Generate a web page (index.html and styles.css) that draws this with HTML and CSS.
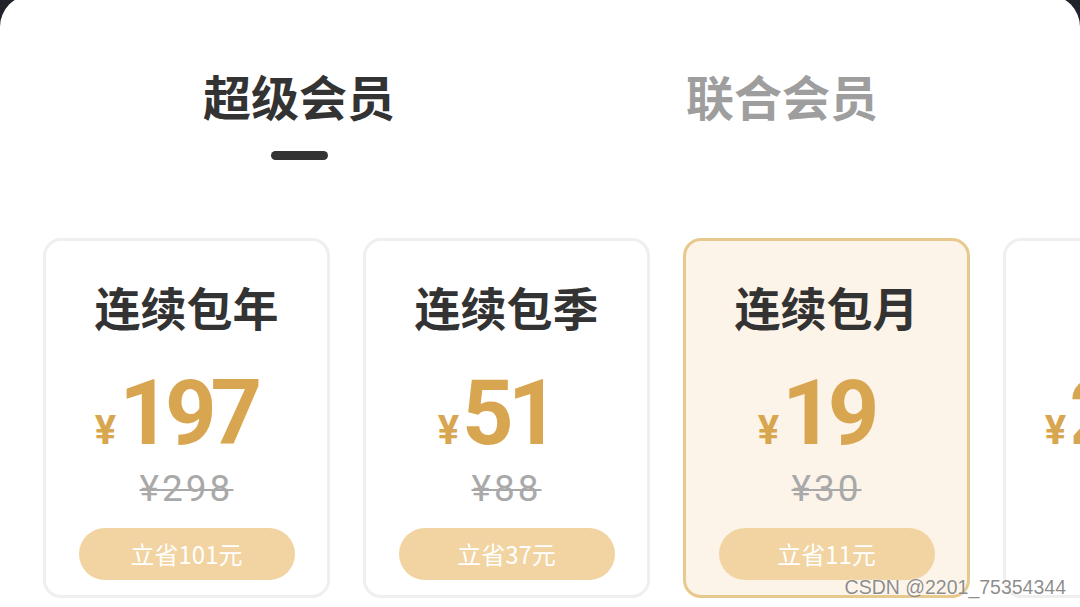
FILE: index.html
```html
<!DOCTYPE html>
<html lang="zh-CN">
<head>
<meta charset="utf-8">
<title>会员</title>
<link rel="stylesheet" href="styles.css">
</head>
<body>
<div class="panel">
  <div class="tabs">
    <div class="tab active">
      <span class="tab-text">超级会员</span>
      <span class="indicator"></span>
    </div>
    <div class="tab">
      <span class="tab-text">联合会员</span>
    </div>
  </div>
  <div class="cards">
    <div class="card">
      <div class="title">连续包年</div>
      <div class="price"><span class="yen">¥</span><span class="num">197</span></div>
      <div class="orig">¥298</div>
      <div class="save">立省101元</div>
    </div>
    <div class="card">
      <div class="title">连续包季</div>
      <div class="price"><span class="yen">¥</span><span class="num">51</span></div>
      <div class="orig">¥88</div>
      <div class="save">立省37元</div>
    </div>
    <div class="card selected">
      <div class="title">连续包月</div>
      <div class="price"><span class="yen">¥</span><span class="num">19</span></div>
      <div class="orig">¥30</div>
      <div class="save">立省11元</div>
    </div>
    <div class="card">
      <div class="title"></div>
      <div class="price"><span class="yen">¥</span><span class="num">25.8</span></div>
    </div>
  </div>
  <div class="watermark">CSDN @2201_75354344</div>
</div>
</body>
</html>
```
FILE: styles.css
```css
html, body {
  margin: 0;
  padding: 0;
  width: 1080px;
  height: 607px;
  overflow: hidden;
  background: #22232a;
}

.panel {
  position: relative;
  margin-top: -5px;
  height: 612px;
  background: #ffffff;
  border-radius: 32px 32px 0 0;
  overflow: hidden;
  font-family: "Noto Sans CJK SC", "Noto Sans", sans-serif;
}

.tabs {
  display: flex;
  align-items: flex-start;
  padding-top: 76px;
  padding-left: 203px;
  gap: 291px;
}

.tab {
  display: flex;
  flex-direction: column;
  align-items: center;
}

.tab-text {
  font-size: 48px;
  line-height: 48px;
  font-weight: 700;
  color: #9e9e9e;
  letter-spacing: 0;
}

.tab.active .tab-text {
  color: #333333;
}

.indicator {
  display: block;
  width: 57px;
  height: 9px;
  margin-top: 32px;
  border-radius: 5px;
  background: #333333;
}

.cards {
  display: flex;
  gap: 33px;
  padding-left: 43px;
  margin-top: 78px;
}

.card {
  flex-shrink: 0;
  box-sizing: border-box;
  width: 287px;
  height: 360px;
  border: 3px solid #efefef;
  border-radius: 18px;
  background: #ffffff;
  display: flex;
  flex-direction: column;
  align-items: center;
  padding-top: 42px;
}

.card.selected {
  border-color: #e7c98d;
  background: #fdf4e9;
}

.title {
  font-size: 46px;
  line-height: 47px;
  font-weight: 700;
  color: #333333;
  height: 47px;
}

.price {
  display: flex;
  align-items: baseline;
  margin-top: 39px;
  padding-right: 22px;
  color: #d8a650;
  font-family: Roboto, "Noto Sans", sans-serif;
  font-weight: 700;
  height: 90px;
  line-height: 90px;
}

.yen {
  font-size: 40px;
  margin-right: 3px;
}

.num {
  font-size: 90px;
  letter-spacing: -6px;
}

.orig {
  margin-top: 13px;
  font-family: Roboto, "Noto Sans", sans-serif;
  font-size: 37px;
  line-height: 34px;
  color: #a9a9a9;
  letter-spacing: 3px;
  text-decoration: line-through;
  text-decoration-thickness: 2px;
  text-decoration-color: #a9a9a9;
}

.save {
  margin-top: 22px;
  width: 216px;
  height: 52px;
  border-radius: 26px;
  background: #f1d4a1;
  color: #ffffff;
  font-size: 24px;
  line-height: 52px;
  text-align: center;
}

.watermark {
  position: absolute;
  right: 14px;
  bottom: 10px;
  font-family: "Liberation Sans", Arial, sans-serif;
  font-size: 19.5px;
  line-height: 20px;
  color: rgba(120, 120, 120, 0.85);
  text-shadow: 0 0 2px rgba(255, 255, 255, 0.9);
}
```
